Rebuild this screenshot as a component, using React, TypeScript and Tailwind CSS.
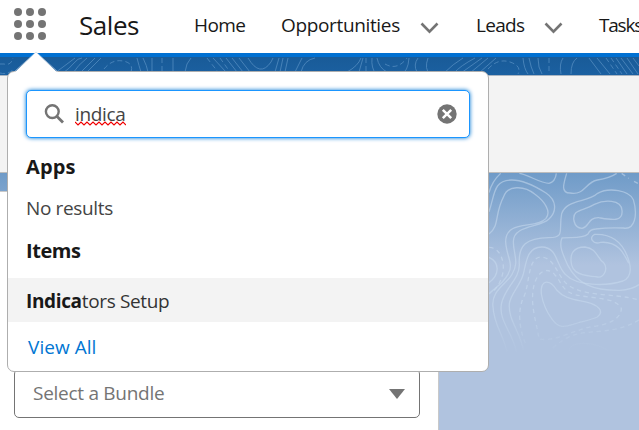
import type { ReactNode } from "react";

function BandLines() {
  return (
    <svg className="absolute inset-0" width="639" height="18" viewBox="0 57 639 18" fill="none" stroke="#4f88bd" strokeWidth="1" strokeOpacity=".85" aria-hidden="true">
      <path d="M55 73L75 58M63 73Q70 68 74 63T82 58M73 73Q78 65 87 58M80 73L95 58M86 73L101 58" />
      <path d="M137 58Q139 66 141 72M143 58Q147 66 148 72M152 58V72M173 72V58M185 72Q186 63 191 58" />
      <path d="M213 58L226 72M226 58L237 72M232 58L243 72M239 58L250 72M248 58Q260 78 271 62L273 58M275 72L279 58M280 72L283 58M285 72L288 58M295 72L302 58M301 72Q304 60 315 58" />
      <path d="M347 72Q358 66 361 58M359 72L363 58M372 58Q371 68 376 74M377 58Q379 68 387 72M401 74Q408 72 409 58M417 72Q413 65 418 58M428 58Q424 69 430 74" />
      <path d="M444 73Q453 64 463 58M454 73Q460 66 475 58M461 73L482 58M470 73L488 58M479 73L496 58M523 58Q524 69 528 74M529 58Q531 68 534 74M538 58Q538 68 542 74M561 74Q559 64 563 58M571 74Q571 62 577 58M589 58L601 74M597 58L610 74M616 58L627 74M621 58L633 74M627 58L638 74M633 58L639 66" />
      <g strokeDasharray="5 3">
        <path d="M0 64H4Q11 66 13 58M0 73Q8 75 14 69M104 69Q112 59 123 61T131 72M162 58V72M207 58L218 72M220 58L230 72M366 58V72M385 64Q397 71 407 58M488 69Q498 58 510 62T518 74M549 58V74M606 58L617 74M611 58L622 74" />
      </g>
    </svg>
  );
}

function TerrainLines() {
  return (
    <svg className="absolute right-0 top-0" width="159" height="257" viewBox="480 173 159 257" fill="none" aria-hidden="true">
      <g transform="translate(480 170) scale(.33333)" stroke="#c9daee" strokeOpacity=".55" strokeWidth="4">
        <path d="M27 68Q36 34 62 10M118 10C146 14 180 40 207 40Q226 35 229 10M260 10C251 40 241 69 270 69C315 77 315 37 352 30Q390 24 410 10" />
        <path d="M27 125C45 72 40 30 95 30C133 30 168 50 198 69C231 91 231 126 206 148C181 173 100 165 100 215C101 258 119 276 95 315C77 344 33 363 39 410C41 462 68 489 81 545" />
        <path d="M27 192C59 169 43 132 71 80C82 46 132 45 165 73C193 94 215 124 198 145C168 179 77 147 77 215C79 260 103 282 84 313C66 345 45 352 27 372" />
        <path d="M110 548C98 487 56 453 64 403C73 353 119 328 118 284C114 222 140 205 207 203C257 203 235 180 245 131C259 87 322 99 353 70C387 51 448 61 460 89C474 135 464 181 430 174Q385 172 347 177Q329 178 324 192C307 208 267 200 246 204C237 224 245 247 264 287C292 341 337 362 420 361Q456 359 477 344" />
        <path d="M130 540C120 483 84 450 88 401C92 371 119 350 130 312C139 275 142 231 185 231C235 232 226 285 257 314C289 348 377 350 429 333C460 319 453 287 442 259C427 218 397 191 344 193C325 202 338 225 362 217C414 213 432 250 446 280" />
        <path d="M282 153C275 116 311 124 343 103C372 89 424 87 426 121C430 158 391 149 356 143C323 142 329 171 306 175Q287 174 282 153ZM275 285C267 250 282 231 315 231C353 236 350 265 371 278C386 298 370 324 353 321C323 317 308 319 288 305Q277 296 275 285Z" />
        <path d="M184 372C180 323 212 330 230 360C254 388 289 388 333 400C362 411 370 427 352 441C328 452 303 454 279 463C247 474 234 471 217 449Q191 414 184 372Z" />
        <path d="M27 262C59 276 60 314 27 338" />
        <g strokeDasharray="13 11">
          <path d="M425 10L446 25M462 34L477 42M28 232C73 233 91 317 35 369M136 520C116 471 114 421 129 385C150 352 140 266 181 261C224 261 231 318 263 344C299 372 361 372 410 378Q450 382 477 390M176 500C168 451 148 398 163 342C174 304 203 288 225 315C245 337 246 363 285 374C334 386 407 381 424 415C423 451 377 465 337 470C287 477 226 517 178 507M477 450C409 491 345 480 292 492Q254 502 218 534" />
        </g>
        <path d="M269 542C271 510 350 515 390 546" opacity=".5" />
      </g>
      <rect x="480" y="310" width="159" height="45" fill="url(#fade)" />
      <rect x="480" y="355" width="159" height="75" fill="#b0c3df" />
      <defs>
        <linearGradient id="fade" x1="0" y1="0" x2="0" y2="1">
          <stop stopColor="#b0c3df" stopOpacity="0" />
          <stop offset="1" stopColor="#b0c3df" />
        </linearGradient>
      </defs>
    </svg>
  );
}

function Chevron({ className }: { className: string }) {
  return (
    <svg className={className} width="20" height="14" viewBox="0 0 20 14" fill="none" stroke="#747474" strokeWidth="2.6" aria-hidden="true">
      <path d="M1.5 1.5L9.5 9.6L17.5 1.5" />
    </svg>
  );
}

function NavLabel({ children, className }: { children: ReactNode; className: string }) {
  return <a className={`shrink-0 whitespace-nowrap text-[19px] leading-[26px] text-[#181818] ${className}`}>{children}</a>;
}

function Header() {
  return (
    <header className="flex h-[57px] items-start overflow-hidden border-b-4 border-[#0070d2] bg-white">
      <button className="ml-[14px] mt-2 grid shrink-0 grid-cols-3 gap-1" aria-label="App Launcher">
        {Array.from({ length: 9 }, (_, i) => <span key={i} className="size-2 rounded-full bg-[#747474]" />)}
      </button>
      <h1 className="ml-[33px] mt-[7px] w-[115px] shrink-0 text-[26px] leading-9 tracking-[-0.45px] text-[#181818]">Sales</h1>
      <nav className="mt-3 flex shrink-0">
        <NavLabel className="w-[87px] tracking-[-0.6px]">Home</NavLabel>
        <NavLabel className="w-[139px] tracking-[-0.35px]">Opportunities</NavLabel>
        <Chevron className="mt-[10px] shrink-0" />
        <NavLabel className="ml-9 w-[68px] tracking-[-0.7px]">Leads</NavLabel>
        <Chevron className="mt-[10px] shrink-0" />
        <NavLabel className="ml-[35px] tracking-[-1.2px]">Tasks</NavLabel>
      </nav>
    </header>
  );
}

function LauncherMenu() {
  return (
    <section className="absolute left-[7px] top-[71px] z-10 h-[301px] w-[482px] rounded-[7px] border border-[#aeaeae] bg-white">
      <svg className="absolute left-[5px] top-[-21px]" width="47" height="23" viewBox="0 0 47 23" aria-hidden="true">
        <path d="M1 22L23 1L45 22Z" fill="white" />
        <path d="M1 21L23 1L45 21" fill="none" stroke="#c9d7e7" strokeWidth=".6" />
      </svg>
      <div className="mx-[18px] mt-[18px] flex h-12 items-center rounded-[5px] border border-[#1b96ff] bg-white px-[17px] shadow-[0_0_4px_#0176d3]">
        <svg className="size-[21px] shrink-0" viewBox="0 0 21 21" fill="none" stroke="#747474" aria-hidden="true">
          <circle cx="8.3" cy="7.6" r="6.4" strokeWidth="2.4" />
          <path d="M12.8 12.2L19 18.5" strokeWidth="2.8" />
        </svg>
        <div className="relative ml-[10px] h-[28px] text-[19px] leading-[28px] tracking-[-0.35px] text-[#444]">
          indica
          <svg className="absolute left-0 top-[21px]" width="51" height="5" viewBox="0 0 51 5" fill="none" stroke="#f00000" strokeWidth="1.2" aria-hidden="true">
            <path d="M0 1L3 4L6 1L9 4L12 1L15 4L18 1L21 4L24 1L27 4L30 1L33 4L36 1L39 4L42 1L45 4L48 1L51 4" />
          </svg>
        </div>
        <svg className="ml-auto mr-[-5px] size-5" viewBox="0 0 20 20" aria-hidden="true">
          <circle cx="10" cy="10" r="9.7" fill="#747474" />
          <path d="M5.8 5.8L14.2 14.2M14.2 5.8L5.8 14.2" stroke="white" strokeWidth="2.5" />
        </svg>
      </div>
      <h2 className="ml-[18px] mt-[15px] text-[20px] font-bold leading-7 tracking-[0.1px] text-[#181818]">Apps</h2>
      <p className="ml-[18px] mt-[13px] text-[19px] leading-7 tracking-[-0.35px] text-[#444]">No results</p>
      <h2 className="ml-[18px] mt-[15px] text-[20px] font-bold leading-7 tracking-[-0.45px] text-[#181818]">Items</h2>
      <div className="mt-[13px] flex h-11 items-center bg-[#f3f3f3] pl-[18px] pt-0.5 text-[19px] tracking-[-0.35px] text-[#333]">
        <span><b className="text-[#181818]">Indica</b>tors Setup</span>
      </div>
      <a className="ml-5 mt-[11px] block text-[19px] leading-7 tracking-[0.05px] text-[#0176d3]">View All</a>
    </section>
  );
}

export default function App() {
  return (
    <div className="relative flex h-[430px] w-[639px] flex-col overflow-hidden bg-[#b0c3df] font-['Open_Sans',sans-serif]">
      <Header />
      <div className="relative h-[18px] shrink-0 bg-gradient-to-b from-[#195b98] to-[#1b60a1]"><BandLines /></div>
      <div className="h-[98px] shrink-0 border-y border-t-[#a9b5c2] border-b-[#bcbcbc] bg-[#f3f3f3]" />
      <main className="relative h-[257px] bg-[linear-gradient(180deg,#6f9bc8_0px,#b0c3df_92px)] pt-[18px]">
        <TerrainLines />
        <div className="flex h-[240px] w-[439px] items-start border-r border-t border-[#c9c9c9] bg-white pl-[14px] pt-[177px]">
          <div className="flex h-[49px] w-[406px] items-center justify-between rounded-[5px] border border-[#747474] pl-[18px] pr-[14px] text-[19px] tracking-[-0.28px] text-[#747474]">
            <span>Select a Bundle</span>
            <svg width="16" height="10" viewBox="0 0 16 10" aria-hidden="true"><path d="M0 0H16L8 10Z" fill="#747474" /></svg>
          </div>
        </div>
      </main>
      <LauncherMenu />
    </div>
  );
}
